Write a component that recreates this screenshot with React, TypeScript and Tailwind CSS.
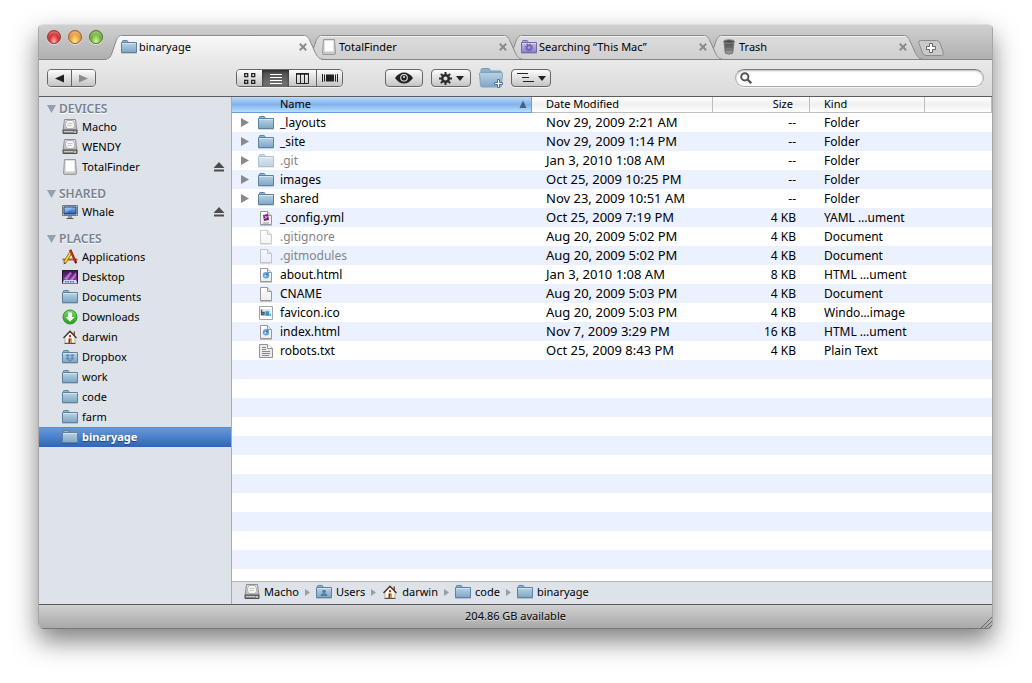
import { useState } from 'react';
import type { ReactNode } from 'react';
import clsx from 'clsx';

type IconName =
  | 'folder'
  | 'dropbox'
  | 'users'
  | 'search'
  | 'drive'
  | 'disk'
  | 'display'
  | 'apps'
  | 'desktop'
  | 'downloads'
  | 'home'
  | 'trash'
  | 'yaml'
  | 'html'
  | 'blank'
  | 'image'
  | 'text';

type FileRow = {
  name: string;
  date: string;
  size: string;
  kind: string;
  icon: IconName;
  dimmed?: boolean;
};

type Place = { label: string; icon: IconName; eject?: boolean };

const files: FileRow[] = [
  { name: '_layouts', date: 'Nov 29, 2009 2:21 AM', size: '--', kind: 'Folder', icon: 'folder' },
  { name: '_site', date: 'Nov 29, 2009 1:14 PM', size: '--', kind: 'Folder', icon: 'folder' },
  { name: '.git', date: 'Jan 3, 2010 1:08 AM', size: '--', kind: 'Folder', icon: 'folder', dimmed: true },
  { name: 'images', date: 'Oct 25, 2009 10:25 PM', size: '--', kind: 'Folder', icon: 'folder' },
  { name: 'shared', date: 'Nov 23, 2009 10:51 AM', size: '--', kind: 'Folder', icon: 'folder' },
  { name: '_config.yml', date: 'Oct 25, 2009 7:19 PM', size: '4 KB', kind: 'YAML …ument', icon: 'yaml' },
  { name: '.gitignore', date: 'Aug 20, 2009 5:02 PM', size: '4 KB', kind: 'Document', icon: 'blank', dimmed: true },
  { name: '.gitmodules', date: 'Aug 20, 2009 5:02 PM', size: '4 KB', kind: 'Document', icon: 'blank', dimmed: true },
  { name: 'about.html', date: 'Jan 3, 2010 1:08 AM', size: '8 KB', kind: 'HTML …ument', icon: 'html' },
  { name: 'CNAME', date: 'Aug 20, 2009 5:03 PM', size: '4 KB', kind: 'Document', icon: 'blank' },
  { name: 'favicon.ico', date: 'Aug 20, 2009 5:03 PM', size: '4 KB', kind: 'Windo…image', icon: 'image' },
  { name: 'index.html', date: 'Nov 7, 2009 3:29 PM', size: '16 KB', kind: 'HTML …ument', icon: 'html' },
  { name: 'robots.txt', date: 'Oct 25, 2009 8:43 PM', size: '4 KB', kind: 'Plain Text', icon: 'text' },
];

const sections: { title: string; items: Place[] }[] = [
  {
    title: 'DEVICES',
    items: [
      { label: 'Macho', icon: 'drive' },
      { label: 'WENDY', icon: 'drive' },
      { label: 'TotalFinder', icon: 'disk', eject: true },
    ],
  },
  { title: 'SHARED', items: [{ label: 'Whale', icon: 'display', eject: true }] },
  {
    title: 'PLACES',
    items: [
      { label: 'Applications', icon: 'apps' },
      { label: 'Desktop', icon: 'desktop' },
      { label: 'Documents', icon: 'folder' },
      { label: 'Downloads', icon: 'downloads' },
      { label: 'darwin', icon: 'home' },
      { label: 'Dropbox', icon: 'dropbox' },
      { label: 'work', icon: 'folder' },
      { label: 'code', icon: 'folder' },
      { label: 'farm', icon: 'folder' },
      { label: 'binaryage', icon: 'folder' },
    ],
  },
];

const tabs: { label: string; icon: IconName }[] = [
  { label: 'binaryage', icon: 'folder' },
  { label: 'TotalFinder', icon: 'disk' },
  { label: 'Searching “This Mac”', icon: 'search' },
  { label: 'Trash', icon: 'trash' },
];

const path: { label: string; icon: IconName }[] = [
  { label: 'Macho', icon: 'drive' },
  { label: 'Users', icon: 'users' },
  { label: 'darwin', icon: 'home' },
  { label: 'code', icon: 'folder' },
  { label: 'binaryage', icon: 'folder' },
];

const Gradient = ({ id, from, to }: { id: string; from: string; to: string }) => (
  <linearGradient id={id} x1="0" y1="0" x2="0" y2="1">
    <stop offset="0" stopColor={from} />
    <stop offset="1" stopColor={to} />
  </linearGradient>
);

const Gradients = () => (
  <svg className="absolute size-0" aria-hidden="true">
    <defs>
      <Gradient id="folder" from="#b9d3e6" to="#7fa6c4" />
      <Gradient id="purple" from="#c5bde8" to="#8f82cc" />
      <Gradient id="metal" from="#e4e4e4" to="#b4b4b4" />
      <Gradient id="screen" from="#8fc1f2" to="#1c54b0" />
      <Gradient id="night" from="#3a1250" to="#a44cc0" />
      <Gradient id="green" from="#7ede5f" to="#1f9c1b" />
      <Gradient id="page" from="#ffffff" to="#ececec" />
      <Gradient id="bin" from="#4b4b4b" to="#b5b5b5" />
      <Gradient id="tabOn" from="#f8f8f8" to="#e9e9e9" />
      <Gradient id="tabOff" from="#dcdcdc" to="#cfcfcf" />
    </defs>
  </svg>
);

const FolderShape = ({ purple }: { purple?: boolean }) => {
  const edge = purple ? '#7467ad' : '#5b82a1';
  return (
    <>
      <path d="M1.5 4V2.2q0-.7.7-.7h3.6q.7 0 .9.7l.3.8" fill={purple ? '#b3a9de' : '#92b4cc'} stroke={edge} />
      <path d="M.5 3.5h15v10H.5z" fill={purple ? 'url(#purple)' : 'url(#folder)'} stroke={edge} />
      <path d="M1 4.5h14" stroke="#fff" strokeOpacity=".45" />
      <path d="M0 14.5h16" stroke="#000" strokeOpacity=".15" />
    </>
  );
};

const PageShape = () => (
  <>
    <path d="M2.5 1.5h7l4 4v9h-11z" fill="url(#page)" stroke="#999" />
    <path d="M9.5 1.5v4h4" fill="#e2e2e2" stroke="#999" />
    <path d="M2 15.5h12" stroke="#000" strokeOpacity=".2" />
  </>
);

const drawings: Record<IconName, ReactNode> = {
  folder: <FolderShape />,
  dropbox: (
    <>
      <FolderShape />
      <path
        d="M5.5 5 8 6.5 5.7 8 3.6 6.6zm5 0L8 6.5 10.3 8l2.100-1.400zM3.600 9.400 5.700 8 8 9.500l-2.300 1.500zm8.800 0L10.300 8 8 9.500l2.300 1.500zM5.800 11.500 8 10.200l2.200 1.300L8 12.800z"
        fill="#5d8bb5"
      />
    </>
  ),
  users: (
    <>
      <FolderShape />
      <circle cx="8" cy="7.5" r="1.8" fill="#4f7da2" />
      <path d="M4.5 12q.3-2.500 3.500-2.700 3.200.2 3.500 2.700z" fill="#4f7da2" />
    </>
  ),
  search: (
    <>
      <FolderShape purple />
      <circle cx="8" cy="8.5" r="2.2" fill="none" stroke="#6a5ab5" strokeWidth="1.3" />
      <circle cx="8" cy="8.5" r="3.4" fill="none" stroke="#6a5ab5" strokeWidth="1.4" strokeDasharray="1.3 1.37" />
    </>
  ),
  drive: (
    <>
      <path d="M2.500.5h11l1.500 11H1z" fill="url(#metal)" stroke="#8e8e8e" />
      <path d="M5 1.500h6l1.500 3v3L11 9.500H5.500L3.500 7V4.500z" fill="#f4f4f4" stroke="#b4b4b4" />
      <path d="M5.500 4.500h5M5.500 6.500h4" stroke="#c6c6c6" />
      <path d="M1 11h14v3.500H1z" fill="#8a8a8a" stroke="#4f4f4f" />
      <path d="M2 12.500h9" stroke="#c4c4c4" />
      <path d="M12 13h2" stroke="#efefef" />
    </>
  ),
  disk: (
    <>
      <path d="M2.500.5h11l1 13.500q0 1.500-1.500 1.500H3q-1.500 0-1.500-1.500z" fill="#c8c8c8" stroke="#999" />
      <path d="M3.500 1.500h9v11h-9z" fill="#fff" />
    </>
  ),
  display: (
    <>
      <path d="M.5 1.500h15v10H.5z" fill="#d0d0d0" stroke="#777" />
      <path d="M2 3h12v7H2z" fill="url(#screen)" stroke="#174180" />
      <path d="M2.500 3.500h8L4 9H2.500z" fill="#fff" fillOpacity=".25" />
      <path d="M6 12h4v2H6z" fill="#999" />
      <path d="M4.500 14.500h7" stroke="#555" />
    </>
  ),
  apps: (
    <>
      <path d="M.5 10.500h15" stroke="#9c6427" strokeWidth="2" />
      <path d="M1 9.500h14" stroke="#dfab63" />
      <path d="M9 3 2.500 14" stroke="#8d5b13" strokeWidth="3.2" />
      <path d="M9 3 2.500 14" stroke="#f7d33e" strokeWidth="1.8" />
      <path d="m8.200.700 6 13.500" stroke="#7d100c" strokeWidth="2.2" />
      <path d="m8.400 1.500 4.800 10.500" stroke="#d33126" strokeWidth="1.2" />
      <path d="m1.500 15.500 1-2.500 1.500 1z" fill="#333" />
    </>
  ),
  desktop: (
    <>
      <path d="M.5 1.500h15v13H.5z" fill="url(#night)" stroke="#28142f" />
      <path d="M2 10 8 3l2 1-5 7zM8 11l6-8v4l-4 5z" fill="#ee9fee" fillOpacity=".6" />
      <path d="M0 1.500h16" stroke="#222" />
      <path d="M2 11h12l1.500 3.500H.5z" fill="#d5dcf3" />
      <path d="M3 12.800h10" stroke="#396fca" strokeWidth="1.5" strokeDasharray="1.5 1" />
    </>
  ),
  downloads: (
    <>
      <circle cx="8" cy="8" r="7" fill="url(#green)" stroke="#25942a" />
      <path d="M6 3.500h4V8h2.500L8 12.700 3.500 8H6z" fill="#fff" />
    </>
  ),
  home: (
    <>
      <path d="M11.500 2.500h1.500v4h-1.500z" fill="#8c4a33" />
      <path d="M3 8 8 3l5 5v6H3z" fill="#fffaf0" stroke="#a99b88" strokeWidth=".8" />
      <path d="M1.500 9 8 2.200 14.500 9" fill="none" stroke="#3f3530" strokeWidth="1.3" />
      <path d="M7 6h2v2.200H7z" fill="#b0401e" />
      <path d="M6.500 9.500h3V14h-3z" fill="#8e2915" />
      <path d="M8 10.500h1V14H8z" fill="#e79a45" />
      <path d="M2.500 14.500h11" stroke="#5b5148" />
    </>
  ),
  trash: (
    <>
      <path d="M3 3h10l-1.300 11.200Q8 16.200 4.300 14.200z" fill="url(#bin)" stroke="#777" />
      <path d="M5 5v9M7 5v10M9 5v10M11 5v9M4 8h8M4 11h8" stroke="#333" strokeOpacity=".35" strokeWidth=".7" />
      <ellipse cx="8" cy="2.5" rx="5.5" ry="1.8" fill="#4a4a4a" stroke="#8c8c8c" />
    </>
  ),
  yaml: (
    <>
      <PageShape />
      <path d="m5 5 5-1 1 6-5 1z" fill="#7a1f75" />
      <path d="m6.500 6 2.500 2m-2.500 1 3-3" stroke="#f0bdea" />
      <path d="M5 13h6" stroke="#999" />
    </>
  ),
  html: (
    <>
      <PageShape />
      <circle cx="8" cy="8.2" r="3.2" fill="#62a5dc" />
      <path d="m5.800 10.200 1.500-2.600 3.500-2-2 3.300z" fill="#2f6fae" />
      <path d="m5.800 10.200 1.500-2.600 1.500 1.300z" fill="#e8f3fb" />
    </>
  ),
  blank: <PageShape />,
  image: (
    <>
      <path d="M1.500 1.500h13v13h-13z" fill="#fff" stroke="#a4a4a4" />
      <path d="M3 4h10v7H3z" fill="#dfe5e9" />
      <path d="M3.500 4.500V9.500H6V7.500H3.500" fill="none" stroke="#4a5560" strokeWidth="1.4" />
      <path d="M7.500 7h3v3H8V8.500h2" fill="none" stroke="#2a94d0" strokeWidth="1.3" />
      <path d="M11.500 10H13" stroke="#2aa1de" strokeWidth="1.5" />
    </>
  ),
  text: (
    <>
      <path d="M1.500 1.500h8l5 4v9h-13z" fill="#eaeaea" stroke="#929292" />
      <path d="M9.500 1.500v4h5" fill="#fff" stroke="#929292" />
      <path d="M4 4.500h4M4 6.500h4M4 8.500h8M4 10.500h8M4 12.500h7" stroke="#888" />
    </>
  ),
};

const Icon = ({ name, dimmed }: { name: IconName; dimmed?: boolean }) => (
  <svg viewBox="0 0 16 16" className={clsx('size-4 shrink-0', dimmed && 'opacity-50')} aria-hidden="true">
    {drawings[name]}
  </svg>
);

const Tab = ({
  label,
  icon,
  active,
  order,
  onSelect,
}: {
  label: string;
  icon: IconName;
  active: boolean;
  order: number;
  onSelect: () => void;
}) => (
  <div
    className="relative flex h-[25px] w-[200px] min-w-0 items-center pr-px pb-0.5 pl-[9px]"
    style={{ zIndex: active ? 20 : order }}
  >
    <svg
      viewBox="0 0 222 25"
      preserveAspectRatio="none"
      className="absolute top-0 -left-2 h-[25px] w-[222px]"
      aria-hidden="true"
    >
      <path
        d="M0 24.500C6 24.500 7 21 9 15L12 6C13.500 2 15 .5 19 .5H199C203 .5 204.500 2 206 6L211 17C213.500 22 215 24.500 221 24.500"
        fill={active ? 'url(#tabOn)' : 'url(#tabOff)'}
        stroke="#8a8a8a"
      />
      {active && <path d="M3 24.500h214" stroke="#e9e9e9" />}
      {!active && <path d="M0 24.500h222" stroke="#868686" />}
      <path d="M16 1.500h186" stroke="#fff" strokeOpacity=".6" />
    </svg>
    <button
      type="button"
      role="tab"
      aria-selected={active}
      onClick={onSelect}
      className="relative flex min-w-0 flex-1 items-center gap-0.5"
    >
      <Icon name={icon} />
      <span className="truncate">{label}</span>
    </button>
    <button type="button" aria-label={`Close ${label}`} className="relative flex size-4 items-center justify-center">
      <svg viewBox="0 0 8 8" className="size-2" aria-hidden="true">
        <path d="m.8.8 6.400 6.400m0-6.400L.8 7.200" stroke="#8b8b8b" strokeWidth="2" />
      </svg>
    </button>
  </div>
);

const lightLook =
  'size-[14px] rounded-full border bg-radial-[at_50%_90%] shadow-[0_1px_0_rgba(255,255,255,0.5),inset_0_2px_2px_rgba(255,255,255,0.35)]';

const TitleBar = () => {
  const [current, setCurrent] = useState(0);

  return (
    <header className="flex h-[35px] items-start rounded-t-[4px] border-b border-[#868686] bg-linear-to-b from-[#d0d0d0] to-[#b0b0b0]">
      <div className="mt-[5px] flex w-[73px] shrink-0 gap-[7px] pl-2">
        <button
          type="button"
          aria-label="Close window"
          className={clsx(lightLook, 'border-[#8a3a3a] from-[#ffb9b4] via-[#e0302f] to-[#961d1d]')}
        />
        <button
          type="button"
          aria-label="Minimize window"
          className={clsx(lightLook, 'border-[#96602c] from-[#fff19a] via-[#eea43c] to-[#b5611b]')}
        />
        <button
          type="button"
          aria-label="Zoom window"
          className={clsx(lightLook, 'border-[#4d7a2a] from-[#dcf7a0] via-[#7dbb45] to-[#3f7d24]')}
        />
      </div>
      <div role="tablist" className="isolate mt-[10px] flex min-w-0">
        {tabs.map((tab, index) => (
          <Tab
            key={tab.label}
            {...tab}
            active={index === current}
            order={tabs.length - index}
            onSelect={() => setCurrent(index)}
          />
        ))}
      </div>
      <button type="button" aria-label="New tab" className="mt-[15px] ml-[6px]">
        <svg viewBox="0 0 26 16" className="h-4 w-[26px]" aria-hidden="true">
          <path
            d="M2.500.5h16q2.500 0 3.500 2.500l3.300 9.500q.8 3-2 3H8q-2.500 0-3.500-2.500L.8 3Q.2.500 2.500.5z"
            fill="#c9c9c9"
            stroke="#8c8c8c"
          />
          <path d="M11.500 3.500h3v3h3v3h-3v3h-3v-3h-3v-3h3z" fill="#fff" stroke="#666" />
        </svg>
      </button>
    </header>
  );
};

const buttonLook =
  'flex h-[18px] items-center justify-center rounded-[4px] border border-[#666] bg-linear-to-b from-[#fdfdfd] to-[#c4c4c4] shadow-[0_1px_0_rgba(255,255,255,0.6)]';

const groupLook = 'flex overflow-hidden rounded-[4px] border border-[#666] shadow-[0_1px_0_rgba(255,255,255,0.6)]';

const segmentLook = 'flex h-4 items-center justify-center bg-linear-to-b from-[#fdfdfd] to-[#c4c4c4]';

const Caret = () => (
  <svg viewBox="0 0 8 5" className="h-[5px] w-2" aria-hidden="true">
    <path d="M0 0h8L4 5z" fill="#222" />
  </svg>
);

const Toolbar = () => (
  <div className="flex h-9 items-center bg-linear-to-b from-[#e9e9e9] to-[#dadada] px-2">
    <div className={groupLook}>
      <button type="button" aria-label="Back" className={clsx(segmentLook, 'w-6 border-r border-[#666]')}>
        <svg viewBox="0 0 9 9" className="size-[9px]" aria-hidden="true">
          <path d="M9 .5v8L0 4.500z" fill="#222" />
        </svg>
      </button>
      <button type="button" aria-label="Forward" className={clsx(segmentLook, 'w-[23px]')}>
        <svg viewBox="0 0 9 9" className="size-[9px]" aria-hidden="true">
          <path d="M0 .5v8l9-4z" fill="#8c8c8c" />
        </svg>
      </button>
    </div>

    <div className={clsx(groupLook, 'ml-[140px]')}>
      <button type="button" aria-label="Icon view" className={clsx(segmentLook, 'w-[25px]')}>
        <svg viewBox="0 0 12 11" className="h-[11px] w-3" aria-hidden="true">
          <path d="M.7.700h3v3h-3zm7 0h3v3h-3zM.7 7.300h3v3h-3zM7.700 7.300h3v3h-3z" fill="none" stroke="#222" strokeWidth="1.3" />
        </svg>
      </button>
      <button
        type="button"
        aria-label="List view"
        aria-pressed="true"
        className="flex h-4 w-[27px] items-center justify-center bg-linear-to-b from-[#4a4a4a] to-[#777] shadow-[inset_0_1px_3px_#222]"
      >
        <svg viewBox="0 0 12 11" className="h-[11px] w-3" aria-hidden="true">
          <path d="M0 1.500h12M0 4.500h12M0 7.500h12M0 10.500h12" stroke="#fff" />
        </svg>
      </button>
      <button type="button" aria-label="Column view" className={clsx(segmentLook, 'w-7 border-r border-[#666]')}>
        <svg viewBox="0 0 13 11" className="h-[11px] w-[13px]" aria-hidden="true">
          <path d="M.5 1v9.500h12V1zM4.500 1v9.500M8.500 1v9.500" fill="none" stroke="#222" />
          <path d="M0 .8h13" stroke="#222" strokeWidth="1.5" />
        </svg>
      </button>
      <button type="button" aria-label="Cover flow view" className={clsx(segmentLook, 'w-[25px]')}>
        <svg viewBox="0 0 16 10" className="h-[10px] w-4" aria-hidden="true">
          <path d="M4 1.500h8v7H4z" fill="#222" />
          <path d="M.5 1v8M2.500 1.500v7M13.500 1.500v7M15.500 1v8" stroke="#222" />
        </svg>
      </button>
    </div>

    <button type="button" aria-label="Quick look" className={clsx(buttonLook, 'ml-[42px] w-[38px]')}>
      <svg viewBox="0 0 18 12" className="h-3 w-[18px]" aria-hidden="true">
        <path d="M0 6Q4 .5 9 .5T18 6q-4 5.500-9 5.500T0 6z" fill="#222" />
        <circle cx="9" cy="5.7" r="3.8" fill="#eee" />
        <circle cx="9" cy="5.7" r="2.8" fill="#222" />
        <circle cx="9" cy="5" r="1" fill="#eee" />
      </svg>
    </button>
    <button type="button" aria-label="Action" className={clsx(buttonLook, 'ml-2 w-10 gap-1')}>
      <svg viewBox="0 0 12 12" className="size-[13px]" aria-hidden="true">
        <circle cx="6" cy="6" r="3" fill="none" stroke="#2b2b2b" strokeWidth="2.2" />
        <path
          d="M6 0v3M6 9v3M0 6h3M9 6h3M1.700 1.700l2.200 2.200M8.100 8.100l2.200 2.200M1.700 10.300l2.200-2.200M8.100 3.900l2.200-2.200"
          stroke="#2b2b2b"
          strokeWidth="1.8"
        />
      </svg>
      <Caret />
    </button>
    <button type="button" aria-label="New folder" className="ml-2">
      <svg viewBox="0 0 24 21" className="h-[21px] w-6" aria-hidden="true">
        <path d="M2 5V2q0-1.500 1.500-1.500h6Q11 .5 11 2v1h10q1.500 0 1.500 2" fill="#8fb0c8" stroke="#7799b2" />
        <path
          d="M.5 5.500Q.5 4.500 1.500 4.500h21q1 0 1 1l-1 12q0 1.500-1.500 1.500H3q-1.500 0-1.500-1.500z"
          fill="url(#folder)"
          stroke="#7fa3be"
        />
        <path d="M18.500 11.500h2v3h3v2h-3v3h-2v-3h-3v-2h3z" fill="#fff" stroke="#4b6ea0" />
      </svg>
    </button>
    <button type="button" aria-label="Arrange" className={clsx(buttonLook, 'ml-2 w-10 gap-1')}>
      <svg viewBox="0 0 17 10" className="h-[10px] w-[17px]" aria-hidden="true">
        <path d="M0 .5h11M5 4.500h7M6 8.500h11" stroke="#222" />
      </svg>
      <Caret />
    </button>

    <label className="ml-auto flex h-[18px] w-[249px] items-center rounded-full border border-[#aaa] border-t-[#777] bg-white pl-1 shadow-[inset_0_1px_2px_#bbb,0_1px_0_#f4f4f4]">
      <svg viewBox="0 0 12 12" className="size-3 shrink-0" aria-hidden="true">
        <circle cx="4.800" cy="4.800" r="3.600" fill="none" stroke="#555" strokeWidth="2" />
        <path d="m7.500 7.500 3.700 3.700" stroke="#555" strokeWidth="2.4" />
      </svg>
      <input type="search" aria-label="Search" className="min-w-0 flex-1 bg-transparent px-1 outline-none" />
    </label>
  </div>
);

const Sidebar = () => (
  <nav
    aria-label="Places"
    className="flex w-[193px] shrink-0 flex-col gap-[9px] border-r border-[#a9adb3] bg-[#dee3ea] pt-1"
  >
    {sections.map((section) => (
      <section key={section.title}>
        <h2 className="flex h-4 items-center gap-[3px] pl-2 text-[12px] font-semibold text-[#76828f] [text-shadow:0_1px_0_#fff]">
          <svg viewBox="0 0 9 8" className="h-2 w-[9px]" aria-hidden="true">
            <path d="M0 0h9L4.500 8z" fill="#93a0ad" />
          </svg>
          {section.title}
        </h2>
        <ul>
          {section.items.map((item) => (
            <li
              key={item.label}
              className={clsx(
                'flex h-5 items-center pr-[6px] pl-[23px]',
                item.label === 'binaryage' &&
                  'bg-linear-to-b from-[#6a9bdc] to-[#2d65b7] font-bold text-white shadow-[inset_0_1px_0_#5a8bcb] [text-shadow:0_1px_1px_#1d3f75]',
              )}
            >
              <a href="#" className="flex flex-1 items-center gap-1">
                <Icon name={item.icon} />
                {item.label}
              </a>
              {item.eject && (
                <button type="button" aria-label={`Eject ${item.label}`}>
                  <svg viewBox="0 0 12 10" className="h-[10px] w-3" aria-hidden="true">
                    <path d="M6 0l5.500 6H.5zM1 7.500h10v2H1z" fill="#4d4d4d" />
                  </svg>
                </button>
              )}
            </li>
          ))}
        </ul>
      </section>
    ))}
  </nav>
);

const headCell =
  'h-4 border-r border-b border-[#bdbdbd] bg-linear-to-b from-white via-[#f0f0f0] to-white p-0 text-left align-top font-normal';

const FileTable = () => (
  <div className="flex-1 bg-[repeating-linear-gradient(to_bottom,#fff_0_19px,#ebf1fe_19px_38px)] bg-[position:0_16px] bg-local">
    <table className="w-full table-fixed border-separate border-spacing-0">
      <thead className="leading-[14px]">
        <tr>
          <th
            aria-sort="ascending"
            className="h-4 w-[300px] border-r border-b border-[#6c9fd9] bg-linear-to-b from-[#bddaf7] via-[#80b3ec] to-[#b5e0ff] p-0 align-top font-normal"
          >
            <button type="button" className="flex w-full items-center justify-between pr-1 pl-12">
              Name
              <svg viewBox="0 0 8 8" className="size-2" aria-hidden="true">
                <path d="M4 .5 7.500 8h-7z" fill="#47627f" />
              </svg>
            </button>
          </th>
          <th className={clsx(headCell, 'w-[181px]')}>
            <button type="button" className="block pl-[14px]">
              Date Modified
            </button>
          </th>
          <th className={clsx(headCell, 'w-[97px]')}>
            <button type="button" className="block w-full pr-4 text-right">
              Size
            </button>
          </th>
          <th className={clsx(headCell, 'w-[115px]')}>
            <button type="button" className="block pl-[14px]">
              Kind
            </button>
          </th>
          <td className={headCell} />
        </tr>
      </thead>
      <tbody className="text-[12px]">
        {files.map((file, index) => (
          <tr key={file.name} className={clsx('h-[19px] leading-[19px]', index % 2 === 0 ? 'bg-white' : 'bg-[#ebf1fe]')}>
            <td className="p-0 pl-[9px]">
              <div className="flex h-[19px] items-center">
                {file.icon === 'folder' ? (
                  <button type="button" aria-label={`Expand ${file.name}`} className="w-[17px]">
                    <svg viewBox="0 0 8 9" className="h-[9px] w-2" aria-hidden="true">
                      <path d="M0 0v9l8-4.500z" fill="#8a8a8a" />
                    </svg>
                  </button>
                ) : (
                  <span className="w-[17px]" />
                )}
                <Icon name={file.icon} dimmed={file.dimmed} />
                <span className={clsx('ml-[6px]', file.dimmed && 'text-[#858585]')}>{file.name}</span>
              </div>
            </td>
            <td className="p-0 pl-[14px] text-[13px]">{file.date}</td>
            <td className="p-0 pr-[14px] text-right">{file.size}</td>
            <td className="p-0 pl-[14px]">{file.kind}</td>
            <td />
          </tr>
        ))}
      </tbody>
    </table>
  </div>
);

const PathBar = () => (
  <nav
    aria-label="Path"
    className="flex h-[23px] items-center gap-[6px] border-t border-[#b4b4b4] bg-[#dee3ea] pb-0.5 pl-3"
  >
    {path.map((part, index) => (
      <div key={part.label} className="flex items-center gap-[6px]">
        {index > 0 && (
          <svg viewBox="0 0 5 7" className="h-[7px] w-[5px]" aria-hidden="true">
            <path d="M0 0v7l5-3.500z" fill="#9a9da1" />
          </svg>
        )}
        <a href="#" className="flex items-center gap-1">
          <Icon name={part.icon} />
          {part.label}
        </a>
      </div>
    ))}
  </nav>
);

export default function App() {
  return (
    <div className="flex min-h-screen bg-white pt-6 pr-[39px] pb-[54px] pl-[38px] font-['Lucida_Grande','Noto_Sans',sans-serif] text-[11px] leading-4 text-black">
      <Gradients />
      <main className="flex min-w-0 flex-1 flex-col rounded-[5px] border border-[#a6a6a6] border-t-[#dedede] border-b-[#777] shadow-[0_12px_26px_rgba(0,0,0,0.5)]">
        <TitleBar />
        <Toolbar />
        <div className="flex flex-1 border-y border-[#5c5c5c]">
          <Sidebar />
          <div className="flex min-w-0 flex-1 flex-col">
            <FileTable />
            <PathBar />
          </div>
        </div>
        <footer className="relative flex h-[23px] items-center justify-center rounded-b-[4px] bg-linear-to-b from-[#d0d0d0] to-[#a9a9a9] pb-0.5 [text-shadow:0_1px_0_rgba(255,255,255,0.5)]">
          204.86 GB available
          <svg viewBox="0 0 12 12" className="absolute right-0 bottom-0 size-3" aria-hidden="true">
            <path d="M1 12 12 1M5 12l7-7M9 12l3-3" stroke="#666" />
          </svg>
        </footer>
      </main>
    </div>
  );
}
